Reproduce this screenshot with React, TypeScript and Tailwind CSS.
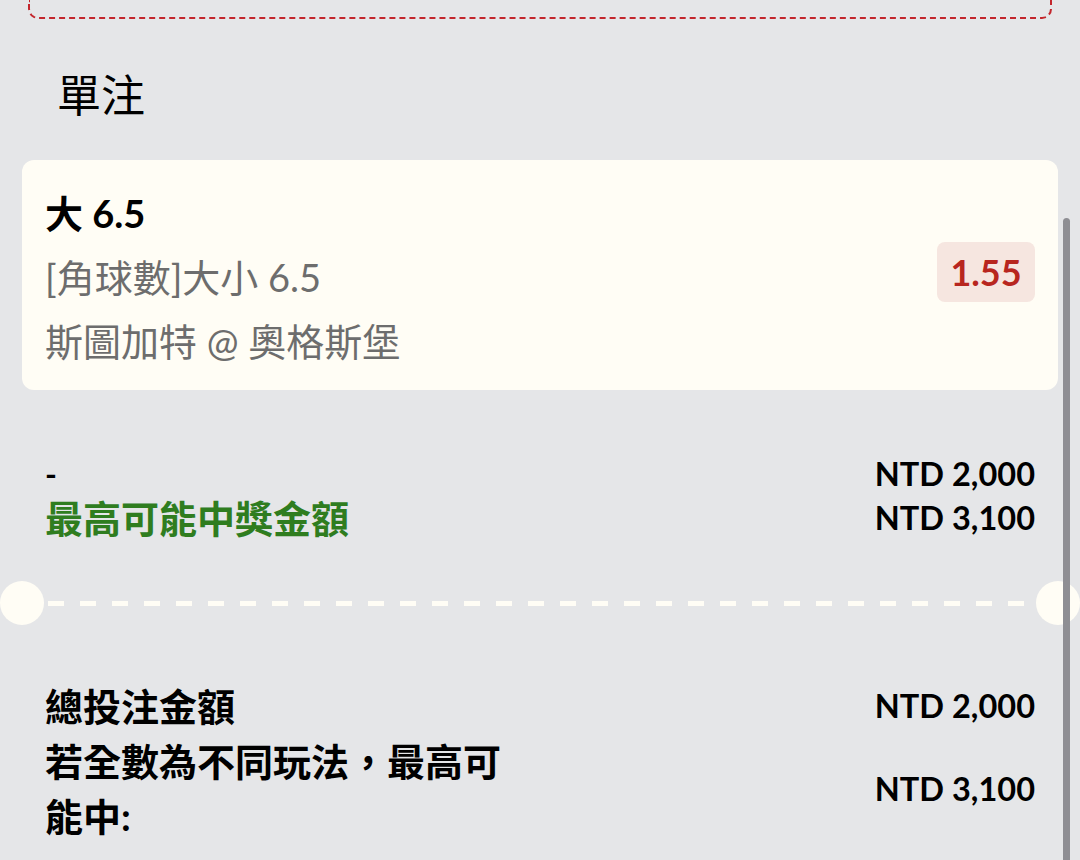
import React from "react";

const FONT = "font-['Lato','Noto_Sans_CJK_TC',sans-serif]";

function Amount({ value }: { value: string }) {
  return <span className="font-bold text-[32.5px] leading-[44px] text-black whitespace-nowrap">NTD {value}</span>;
}

export default function App() {
  return (
    <div className={`relative w-[1080px] h-[860px] overflow-hidden bg-[#e5e6e8] ${FONT}`}>
      {/* previous section box (cut off at top) */}
      <div className="mx-[28px] h-[19px] border-2 border-t-0 border-dashed border-[#c3262c] rounded-b-[10px]" />

      <div className="pl-[57px] pt-[50px] h-[141px] text-[44px] leading-[52px] text-black">單注</div>

      {/* selection card */}
      <div className="mx-[22px] flex items-center justify-between rounded-[12px] bg-[#fffdf5] px-[23px] pt-[22px] pb-[17px]">
        <div className="flex flex-col">
          <span className="text-[38px] leading-[63px] font-bold text-black">大 6.5</span>
          <span className="text-[38px] leading-[64px] text-[#6d6d6d]">[角球數]大小 6.5</span>
          <span className="text-[38px] leading-[64px] text-[#6d6d6d]">斯圖加特 @ 奧格斯堡</span>
        </div>
        <div className="mb-[12px] flex h-[60px] w-[98px] items-center justify-center rounded-[8px] bg-[#f6e6e0] text-[36px] font-bold text-[#b8261f]">
          1.55
        </div>
      </div>

      {/* stake row */}
      <div className="mt-[62px] flex justify-between px-[45px]">
        <div className="flex flex-col">
          <span className="text-[32px] leading-[44px] font-bold text-black">-</span>
          <span className="text-[38px] leading-[44px] font-bold text-[#2f7d1f]">最高可能中獎金額</span>
        </div>
        <div className="flex flex-col items-end">
          <Amount value="2,000" />
          <Amount value="3,100" />
        </div>
      </div>

      {/* ticket tear line */}
      <div className="mt-[41px] flex items-center">
        <div className="h-[44px] w-[44px] shrink-0 rounded-full bg-[#fffdf5]" />
        <div className="mx-[4px] h-[5px] flex-1 bg-[repeating-linear-gradient(90deg,#fffdf5_0_16px,transparent_16px_32px)]" />
        <div className="h-[44px] w-[44px] shrink-0 rounded-full bg-[#fffdf5]" />
      </div>

      {/* totals */}
      <div className="mt-[53px] flex flex-col px-[45px]">
        <div className="flex items-center justify-between">
          <span className="text-[38px] leading-[56px] font-bold text-black">總投注金額</span>
          <Amount value="2,000" />
        </div>
        <div className="flex items-center justify-between">
          <span className="w-[470px] text-[38px] leading-[55px] font-bold text-black">若全數為不同玩法，最高可能中:</span>
          <Amount value="3,100" />
        </div>
      </div>

      {/* scrollbar overlay */}
      <div className="absolute left-[1063px] top-[218px] h-[700px] w-[7px] rounded-full bg-[#8e8e93]" />
    </div>
  );
}
